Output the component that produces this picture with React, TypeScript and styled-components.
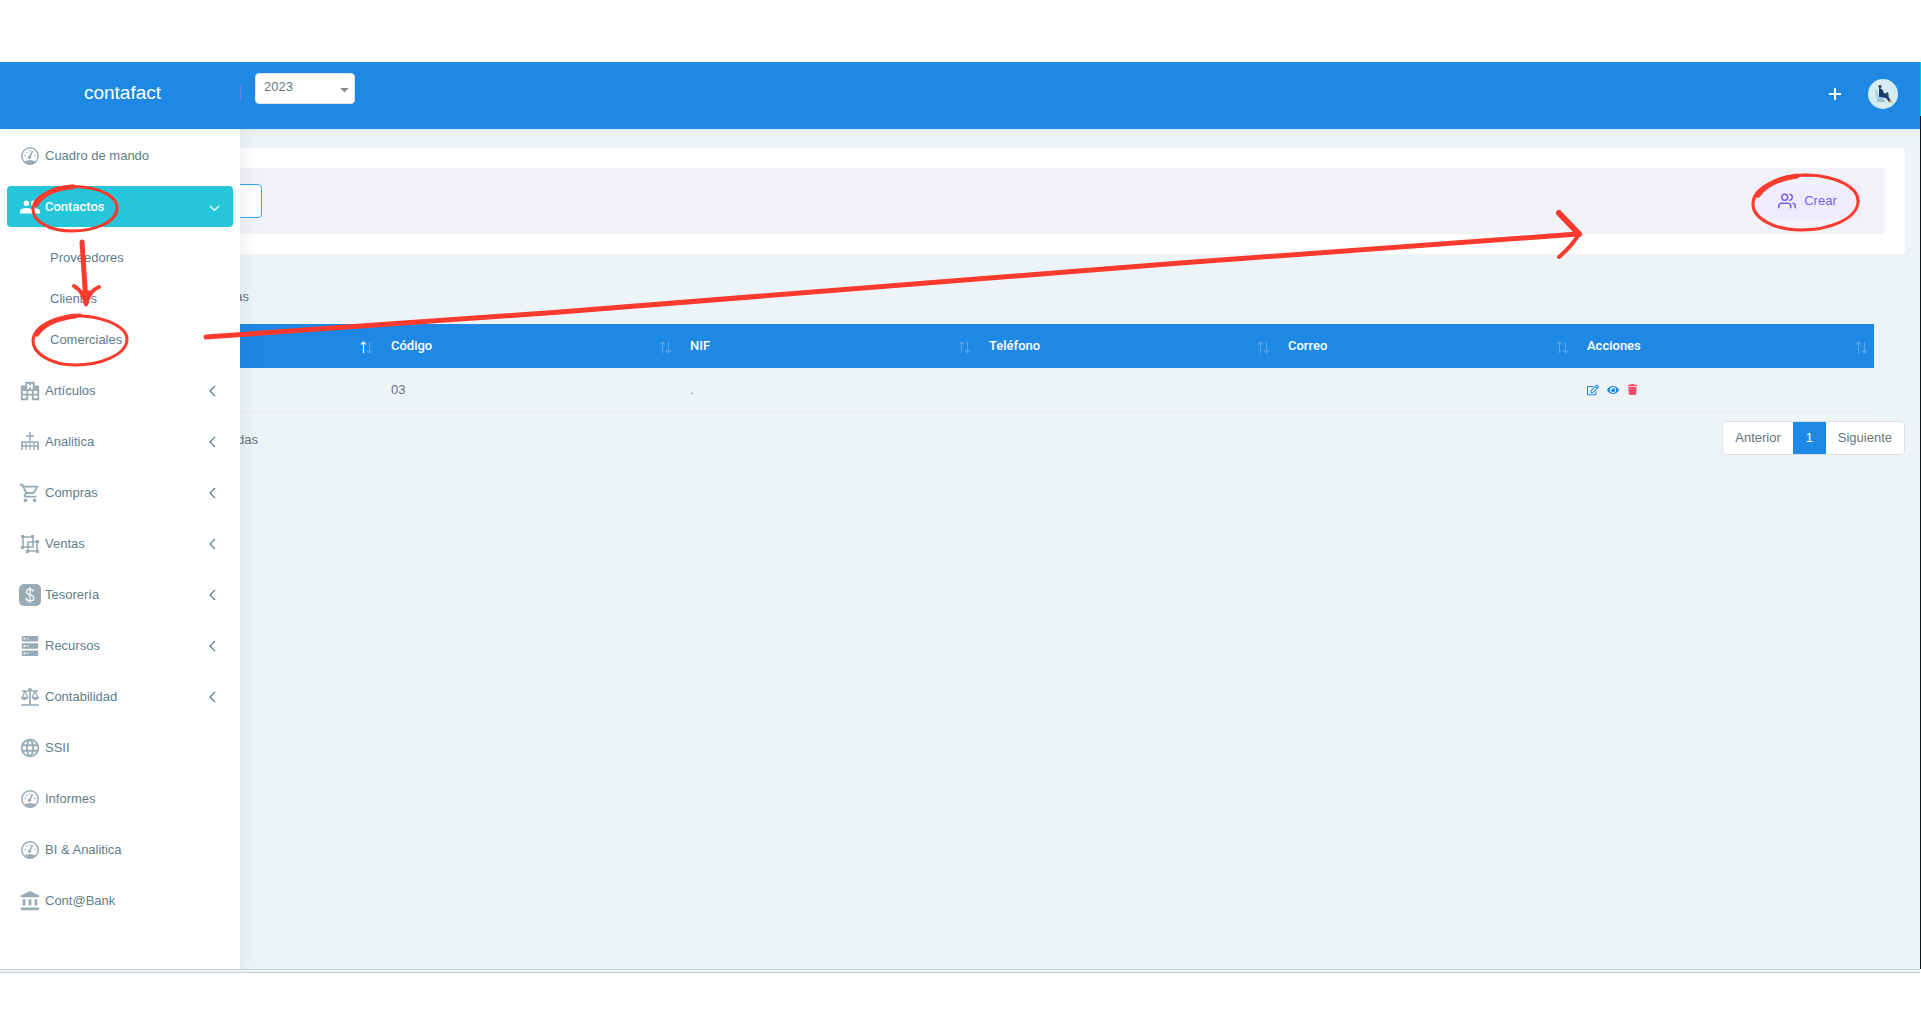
import React from "react";
import styled, { createGlobalStyle, css } from "styled-components";
import { MdOutlineShoppingCart, MdLanguage, MdAccountBalance } from "react-icons/md";
import { FiUsers } from "react-icons/fi";
import { FaRegEdit, FaEye, FaTrash, FaCaretDown } from "react-icons/fa";

const Global = createGlobalStyle`
  * { box-sizing: border-box; }
  body { margin: 0; background: #fff; color: #67757c; font: 13px/20px "Liberation Sans", Arial, sans-serif; }
  button, input, select { font: inherit; color: inherit; }
  a { color: inherit; text-decoration: none; }
`;

const Page = styled.div`
  position: relative;
  min-height: 100vh;
  padding: 62px 0 60px;
  display: flex;
`;

const Screen = styled.div`
  flex: 1;
  display: flex;
  flex-direction: column;
  overflow: hidden;
  background: #ecf4f8;
  border-bottom: 4px double #c4ccd4;
`;

const Edge = styled.div`
  width: 1px;
  margin-bottom: 4px;
  background: linear-gradient(#00c8d8 54px, #10181c 54px);
`;

const Header = styled.header`
  height: 67px;
  display: flex;
  align-items: center;
  background: #1e88e5;
  color: #fff;
  box-shadow: 0 2px 8px rgba(0, 0, 0, 0.05);
  z-index: 3;
`;

const Brand = styled.a`
  width: 240px;
  padding: 0 0 6px 5px;
  font-size: 19px;
  text-align: center;
`;

const Divider = styled.span`
  width: 1px;
  height: 15px;
  margin-bottom: 6px;
  background: #7f7be0;
`;

const YearBox = styled.label`
  position: relative;
  align-self: flex-start;
  margin: 11px 0 0 14px;
  color: #8a8a8a;
  select {
    appearance: none;
    display: block;
    width: 100px;
    height: 31px;
    padding: 0 8px 4px;
    border: 1px solid #dfe3e8;
    border-radius: 4px;
    background: #fff;
    color: #67757c;
  }
  svg { position: absolute; right: 4px; top: 10px; pointer-events: none; }
`;

const Tools = styled.div`
  margin: 0 22px 4px auto;
  display: flex;
  align-items: center;
  gap: 26px;
`;

const IconButton = styled.button`
  display: flex;
  padding: 0;
  border: 0;
  background: none;
  cursor: pointer;
`;

const Body = styled.div`
  flex: 1;
  display: grid;
  grid-template-columns: minmax(0, 1fr);
`;

const Sidebar = styled.nav`
  grid-area: 1 / 1;
  width: 240px;
  padding: 6px 7px;
  background: #fff;
  box-shadow: 1px 0 20px rgba(0, 0, 0, 0.08);
  z-index: 2;
`;

const List = styled.ul`
  margin: 0;
  padding: 0;
  list-style: none;
`;

const Entry = styled.li`
  margin-bottom: 10px;
`;

const Item = styled.a<{ $active?: boolean }>`
  height: 41px;
  padding: 0 12px;
  display: flex;
  align-items: center;
  gap: 4px;
  border-radius: 4px;
  color: #607d8b;
  > svg:first-child { color: #99abb4; }
  ${(p) =>
    p.$active &&
    css`
      background: #26c6da;
      color: #fff;
      font-family: Roboto, "Liberation Sans", sans-serif;
      font-weight: 500;
      > svg:first-child { color: #fff; }
    `}
`;

const Chevron = styled.svg`
  margin-left: auto;
`;

const SubList = styled(List)`
  margin-top: 10px;
`;

const SubItem = styled.a`
  height: 41px;
  padding-left: 43px;
  display: flex;
  align-items: center;
  color: #607d8b;
`;

const Main = styled.main`
  grid-area: 1 / 1;
  padding: 19px 15px 15px 75px;
`;

const Card = styled.section`
  padding: 20px;
  border-radius: 4px;
  background: #fff;
`;

const Bar = styled.div`
  height: 66px;
  padding: 0 24px;
  display: flex;
  align-items: center;
  justify-content: space-between;
  background: #f2f3f8;
`;

const Search = styled.input`
  width: 143px;
  height: 34px;
  border: 1px solid #36a3f7;
  border-radius: 4px;
  background: #fff;
`;

const Create = styled.button`
  width: 107px;
  height: 34px;
  display: flex;
  align-items: center;
  justify-content: center;
  gap: 8px;
  border: 0;
  border-radius: 4px;
  background: #f0ecfd;
  color: #7460ee;
  cursor: pointer;
`;

const Length = styled.label`
  width: 174px;
  margin-top: 33px;
  display: flex;
  justify-content: flex-end;
  gap: 6px;
  select { width: 50px; height: 20px; }
`;

const Table = styled.table`
  width: calc(100% - 36px);
  margin: 17px 0 8px 5px;
  table-layout: fixed;
  border-collapse: collapse;
`;

const Th = styled.th`
  height: 44px;
  padding: 0 6px 0 12px;
  background: #1e88e5;
  color: #fff;
  text-align: left;
  font-family: Roboto, "Liberation Sans", sans-serif;
  font-weight: 500;
  > div { display: flex; align-items: center; justify-content: space-between; }
`;

const Td = styled.td`
  height: 44px;
  padding: 0 12px;
  border-bottom: 1px solid #e6ecf0;
`;

const Actions = styled.div`
  display: flex;
  align-items: center;
  gap: 8px;
`;

const Footer = styled.div`
  display: flex;
  justify-content: space-between;
`;

const Info = styled.p`
  width: 183px;
  margin: 9px 0 0;
  text-align: right;
  white-space: nowrap;
`;

const Pager = styled.div`
  display: flex;
  border: 1px solid #dee2e6;
  border-radius: 4px;
  background: #fff;
`;

const PageButton = styled.button<{ $current?: boolean }>`
  min-width: 33px;
  height: 32px;
  padding: 0 12px;
  border: 0;
  background: ${(p) => (p.$current ? "#1e88e5" : "none")};
  color: ${(p) => (p.$current ? "#fff" : "#67757c")};
  cursor: pointer;
`;

const Marks = styled.svg`
  position: absolute;
  left: 0;
  top: 0;
  pointer-events: none;
  z-index: 5;
`;

const people =
  "M16,13C15.71,13 15.38,13 15.03,13.05C16.19,13.89 17,15 17,16.5V19H23V16.5C23,14.17 18.33,13 16,13M8,13C5.67,13 1,14.17 1,16.5V19H15V16.5C15,14.17 10.33,13 8,13M8,11A3,3 0 0,0 11,8A3,3 0 0,0 8,5A3,3 0 0,0 5,8A3,3 0 0,0 8,11M16,11A3,3 0 0,0 19,8A3,3 0 0,0 16,5A3,3 0 0,0 13,8A3,3 0 0,0 16,11Z";
const hospital =
  "M2,22V7A1,1 0 0,1 3,6H7V2H17V6H21A1,1 0 0,1 22,7V22H14V17H10V22H2M9,4V10H11V8H13V10H15V4H13V6H11V4H9M4,20H8V17H4V20M4,15H8V12H4V15M16,20H20V17H16V20M16,15H20V12H16V15M10,15H14V12H10V15Z";
const server =
  "M4,1H20A1,1 0 0,1 21,2V6A1,1 0 0,1 20,7H4A1,1 0 0,1 3,6V2A1,1 0 0,1 4,1M4,9H20A1,1 0 0,1 21,10V14A1,1 0 0,1 20,15H4A1,1 0 0,1 3,14V10A1,1 0 0,1 4,9M4,17H20A1,1 0 0,1 21,18V22A1,1 0 0,1 20,23H4A1,1 0 0,1 3,22V18A1,1 0 0,1 4,17M9,5H10V3H9V5M9,13H10V11H9V13M9,21H10V19H9V21M5,3V5H7V3H5M5,11V13H7V11H5M5,19V21H7V19H5Z";

const Glyph = ({ d }: { d: string }) => (
  <svg width="22" height="22" viewBox="0 0 24 24" fill="currentColor" fillRule="evenodd" aria-hidden="true">
    <path d={d} />
  </svg>
);

const Line = ({ children }: { children: React.ReactNode }) => (
  <svg width="22" height="22" viewBox="0 0 22 22" fill="none" stroke="currentColor" strokeWidth="2" aria-hidden="true">
    {children}
  </svg>
);

const Gauge = () => (
  <Line>
    <circle cx="11" cy="11" r="8.2" strokeWidth="1.5" />
    <path d="M5 17c2-2.4 10-2.4 12 0-3 3.400-9 3.400-12 0z" fill="currentColor" stroke="none" />
    <path d="M10.500 12.500L13.500 6" strokeWidth="1.700" />
    <circle cx="10.500" cy="12.300" r="1.600" fill="currentColor" stroke="none" />
    <path d="M5.500 10.500h1.300M7.300 7.300h1.300M10.300 5.800h1.200M15.500 10.500h1.300" strokeWidth="1.300" />
  </Line>
);

const Fence = () => (
  <Line>
    <path d="M11 1v8M7 5h8" strokeWidth="1.500" />
    <path d="M3 19v-8h16v8M2 15h18" strokeWidth="1.700" />
    <path d="M7 11v8M11 9v10M15 11v8" strokeWidth="1.300" />
  </Line>
);

const Ungroup = () => (
  <Line>
    <path d="M4 4h10v10H4zM9 9h9v9H9z" strokeWidth="1.600" />
    <path d="M2 2h3v3H2zM12 2h3v3h-3zM2 13h3v3H2zM17 7h3v3h-3zM17 17h3v3h-3zM7 17h3v3H7z" fill="currentColor" stroke="none" />
  </Line>
);

const Scale = () => (
  <Line>
    <path d="M11 3v16M2 19h18" strokeWidth="1.700" />
    <path d="M3 5h5l3-1 3 1h5M6 5l-3 7M6 5l3 7M16 5l-3 7M16 5l3 7" strokeWidth="1.300" />
    <path d="M2 11h7c0 4-7 4-7 0zM13 11h7c0 4-7 4-7 0z" fill="currentColor" stroke="none" />
    <circle cx="11" cy="4" r="2" fill="currentColor" stroke="none" />
  </Line>
);

const Dollar = () => (
  <svg width="22" height="22" viewBox="0 0 22 22" fill="none" aria-hidden="true">
    <rect width="22" height="22" rx="5" fill="currentColor" />
    <path d="M14.500 7.500c-.5-1.500-1.700-2.300-3.500-2.300-2 0-3.500 1-3.500 2.700 0 4 7.400 2 7.400 6 0 1.800-1.600 2.900-3.900 2.900-2.200 0-3.600-1-4-2.800M11 3v16" stroke="#fff" strokeWidth="1.200" />
  </svg>
);

const Avatar = () => (
  <svg width="30" height="30" viewBox="0 0 30 30" aria-hidden="true">
    <circle cx="15" cy="15" r="15" fill="#d5edf2" />
    <path d="M8 11l2 9h6" stroke="#9ccbe0" strokeWidth="2" fill="none" />
    <path d="M11 9l3 1 2 4 4 3 3 5-2 1-3-4-7-1z" fill="#173a70" />
    <circle cx="12" cy="7.500" r="1.500" fill="#3a2c33" />
    <path d="M16 15l4-2 1 5z" fill="#39475c" />
    <path d="M21 22l2-2 1 3-2 1z" fill="#e9a23b" />
    <path d="M9 22h8" stroke="#7894a5" />
  </svg>
);

const menu: { label: string; icon: React.ReactNode; arrow?: boolean; sub?: string[] }[] = [
  { label: "Cuadro de mando", icon: <Gauge /> },
  { label: "Contactos", icon: <Glyph d={people} />, sub: ["Proveedores", "Clientes", "Comerciales"] },
  { label: "Artículos", icon: <Glyph d={hospital} />, arrow: true },
  { label: "Analitica", icon: <Fence />, arrow: true },
  { label: "Compras", icon: <MdOutlineShoppingCart size={22} />, arrow: true },
  { label: "Ventas", icon: <Ungroup />, arrow: true },
  { label: "Tesorería", icon: <Dollar />, arrow: true },
  { label: "Recursos", icon: <Glyph d={server} />, arrow: true },
  { label: "Contabilidad", icon: <Scale />, arrow: true },
  { label: "SSII", icon: <MdLanguage size={22} /> },
  { label: "Informes", icon: <Gauge /> },
  { label: "BI & Analitica", icon: <Gauge /> },
  { label: "Cont@Bank", icon: <MdAccountBalance size={22} /> },
];

const columns = ["", "Código", "NIF", "Teléfono", "Correo", "Acciones"];

const Sort = ({ first }: { first: boolean }) => (
  <svg width="13" height="18" viewBox="0 0 13 18" fill="none" stroke="#fff" strokeWidth="1.200" aria-hidden="true">
    <path d="M3.500 16V5M1 7.500L3.500 5 6 7.500" opacity={first ? 1 : 0.25} />
    <path d="M9.500 5v11M7 13.500l2.500 2.500 2.500-2.500" opacity="0.25" />
  </svg>
);

export default function App() {
  return (
    <Page>
      <Global />
      <Screen>
        <Header>
          <Brand href="#">contafact</Brand>
          <Divider />
          <YearBox>
            <select aria-label="Ejercicio" defaultValue="2023">
              <option>2023</option>
            </select>
            <FaCaretDown size={13} />
          </YearBox>
          <Tools>
            <IconButton aria-label="Añadir">
              <svg width="14" height="14" viewBox="0 0 14 14" stroke="#fff" strokeWidth="2">
                <path d="M7 1v12M1 7h12" />
              </svg>
            </IconButton>
            <IconButton aria-label="Perfil">
              <Avatar />
            </IconButton>
          </Tools>
        </Header>
        <Body>
          <Sidebar>
            <List>
              {menu.map((m) => (
                <Entry key={m.label}>
                  <Item href="#" $active={!!m.sub}>
                    {m.icon}
                    {m.label}
                    {(m.arrow || m.sub) && (
                      <Chevron width="14" height="14" viewBox="0 0 14 14" fill="none" stroke="currentColor" strokeWidth="1.200">
                        <path d={m.sub ? "M3 6L7.500 10.500 12 6" : "M8 2L3 7l5 5"} />
                      </Chevron>
                    )}
                  </Item>
                  {m.sub && (
                    <SubList>
                      {m.sub.map((s) => (
                        <li key={s}>
                          <SubItem href="#">{s}</SubItem>
                        </li>
                      ))}
                    </SubList>
                  )}
                </Entry>
              ))}
            </List>
          </Sidebar>
          <Main>
            <Card>
              <Bar>
                <Search aria-label="Buscar" />
                <Create>
                  <FiUsers size={18} />
                  Crear
                </Create>
              </Bar>
            </Card>
            <Length>
              <select aria-label="Filas" defaultValue="10">
                <option>10</option>
              </select>
              entradas
            </Length>
            <Table>
              <thead>
                <tr>
                  {columns.map((c, i) => (
                    <Th key={c}>
                      <div>
                        <span>{c}</span>
                        <Sort first={i === 0} />
                      </div>
                    </Th>
                  ))}
                </tr>
              </thead>
              <tbody>
                <tr>
                  <Td />
                  <Td>03</Td>
                  <Td>.</Td>
                  <Td />
                  <Td />
                  <Td>
                    <Actions>
                      <IconButton aria-label="Editar"><FaRegEdit size={12} color="#1e88e5" /></IconButton>
                      <IconButton aria-label="Ver"><FaEye size={12} color="#1e88e5" /></IconButton>
                      <IconButton aria-label="Borrar"><FaTrash size={11} color="#fc4b6c" /></IconButton>
                    </Actions>
                  </Td>
                </tr>
              </tbody>
            </Table>
            <Footer>
              <Info>1 a 1 de 1 entradas</Info>
              <Pager>
                <PageButton>Anterior</PageButton>
                <PageButton $current>1</PageButton>
                <PageButton>Siguiente</PageButton>
              </Pager>
            </Footer>
          </Main>
        </Body>
      </Screen>
      <Edge />
      <Marks width="1921" height="1033" fill="none" stroke="#fc3a2e" strokeWidth="3" strokeLinecap="round" strokeLinejoin="round" aria-hidden="true">
        <path d="M36 206C42 190 62 185 82 187C104 189 118 198 117 209C116 223 93 231 72 231C49 231 32 221 33 208C34 197 51 188 74 186" />
        <path d="M37 203C44 193 58 188 72 187" strokeWidth="5" />
        <path d="M36 335C44 321 62 315 83 316C108 318 128 328 127 340C126 355 100 365 75 365C51 365 32 353 33 340C34 327 52 317 80 315" />
        <path d="M37 334C44 323 60 318 75 316" strokeWidth="5" />
        <path d="M82 242L86 303" strokeWidth="5" />
        <path d="M74 286Q83 291 86 304Q89 291 99 287" strokeWidth="4" />
        <path d="M82 292L86 305L90 292z" fill="#fc3a2e" />
        <path d="M206 337L560 312L1180 263L1578 234" strokeWidth="5" />
        <path d="M1559 213L1579 234" strokeWidth="6" />
        <path d="M1579 234Q1572 246 1559 257" strokeWidth="4" />
        <path d="M1757 196C1766 182 1782 175 1808 175C1836 176 1859 187 1858 202C1857 219 1829 230 1801 230C1774 230 1752 218 1753 203C1754 188 1776 177 1805 175" />
        <path d="M1758 195C1766 184 1782 178 1797 176" strokeWidth="5" />
      </Marks>
    </Page>
  );
}
